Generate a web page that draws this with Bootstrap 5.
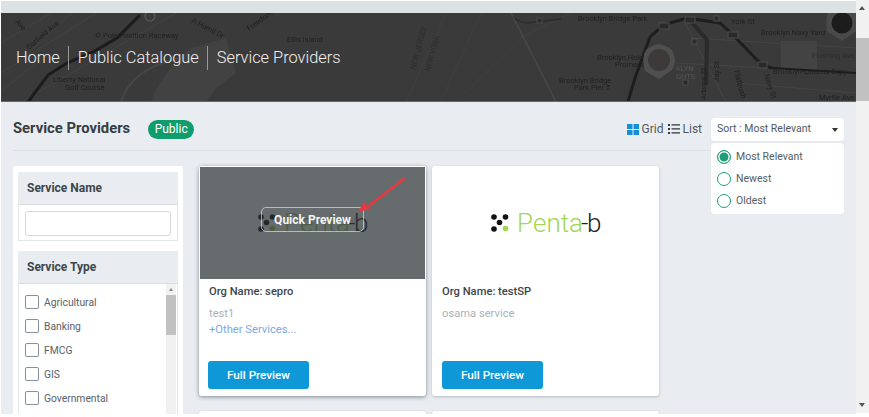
<!DOCTYPE html>
<html lang="en">
<head>
<meta charset="utf-8">
<title>Service Providers</title>
<link href="https://cdn.jsdelivr.net/npm/bootstrap@5.3.0/dist/css/bootstrap.min.css" rel="stylesheet">
<style>
html,body{height:417px;overflow:hidden;background:#fff}
body{font-family:Roboto,"Liberation Sans",sans-serif;color:#3d454b;padding:1px 0 3px 1px;font-size:12px}
.pg-main{width:855px;height:413px;overflow:hidden;background:#e9edf1;position:relative}
.pg-strip{height:12px;background:#dce1e4}
.pg-hero{height:89px;background:#3b3b3b;position:relative;padding-left:15px;border-bottom:1px solid #666;overflow:hidden}
.pg-map{position:absolute;left:0;top:0;width:855px;height:89px;filter:blur(.4px)}
.pg-map text{font-family:Roboto,"Liberation Sans",sans-serif;font-size:7.500px;fill:#212121}
.pg-crumb{position:relative;height:100%;font-size:16.400px;font-weight:300;color:#f1f1f1;padding-top:2px}
.pg-crumb span{line-height:24px}
.pg-crumb span+span{border-left:1px solid #999;margin-left:8px;padding-left:9px}
.pg-head{height:49px;margin:0 12px;border-bottom:1px solid #dde1e5;padding-top:6px}
.pg-title{font-size:14.800px;font-weight:700;margin:0;color:#353c42}
.pg-badge{background:#0f9d6e;font-size:12px;font-weight:400;margin-left:18px;width:46px;height:19px;padding:0;line-height:19px}
.pg-view{font-size:12px;color:#50585e}
.pg-view svg{display:block}
.pg-view-item{gap:3px}
.pg-views{gap:4px;margin-right:9px}
.pg-select{width:133px;height:23px;background:#fff;border-radius:3px;padding:0 6px;font-size:10.500px;color:#50585e;box-shadow:0 0 1px #c9ced2}
.pg-caret{width:0;height:0;border:3px solid transparent;border-top:4px solid #333;margin-top:4px}
.pg-menu{position:absolute;left:710px;top:142px;width:133px;height:71px;background:#fff;border-radius:3px;padding:3px 6px;z-index:3;box-shadow:0 0 1px #c9ced2}
.pg-menu label{height:22px;font-size:10.500px;color:#555d63;gap:5px}
.pg-menu input.form-check-input{width:14px;height:14px;margin:0;background-image:none;border:1.500px solid #1f9d77;background-color:#fff;flex:none}
.pg-menu input.form-check-input:checked{box-shadow:inset 0 0 0 1.500px #fff;background:#1f9d77;border-color:#1f9d77}
.pg-body{margin:15px 12px 0;gap:16px}
.pg-side{width:170px;height:260px;background:#fff;border-radius:3px;padding:6px 5px 0;flex:none}
.pg-fhead{height:32px;background:#e9edf1;font-size:12px;font-weight:700;padding-left:9px;color:#3d454b}
.pg-fbox{height:37px;border:1px solid #e4e7ea;border-top-color:#d8dcdf;padding:6px;margin-bottom:10px}
.pg-fbox input.form-control{height:25px;min-height:0;padding:0;border-color:#d5d9dc;border-radius:3px}
.pg-list{height:140px;border:1px solid #e4e7ea;border-top-color:#d8dcdf;padding:11px 0 0 6px;position:relative;overflow:hidden}
.pg-list label{height:24px;font-size:10.300px;color:#596168;gap:5px;align-items:flex-start;line-height:14px;padding-top:0}
.pg-list label span{padding-top:1px}
.pg-list input.form-check-input{width:14px;height:14px;margin:0;border:1.500px solid #84919a;border-radius:2px;flex:none}
.pg-lbar{position:absolute;top:0;right:1px;bottom:0;width:10px;background:#f1f1f1}
.pg-lthumb{position:absolute;top:11px;left:0;right:0;height:40px;background:#c1c1c1}
.pg-larrow{position:absolute;top:4px;left:3px;border:2px solid transparent;border-bottom:3px solid #888;border-top:0}
.pg-grid{display:grid;grid-template-columns:227px 227px;gap:15px 6px;align-content:start}
.pg-card{height:230px;border:0;border-radius:3px;box-shadow:0 1px 3px rgba(60,75,85,.3);background:#fff}
.pg-card-first{box-shadow:0 1px 4px rgba(40,55,65,.55)}
.pg-shot{height:113px;position:relative;overflow:hidden}
.pg-shade{position:absolute;inset:1px 1px 0;background:rgba(43,50,53,.72)}
.pg-quick{width:103px;height:25px;background:transparent;border:1px solid rgba(255,255,255,.55);border-radius:5px;color:#f4f4f4;font-size:12px;font-weight:700;padding:0;position:absolute;left:62px;top:41px}
.pg-arrow{position:absolute;left:0;top:0;width:227px;height:113px}
.pg-logo{gap:8px;color:#a2d653;font-size:26px;font-weight:300;line-height:1;font-family:Roboto,"Liberation Sans",sans-serif}
.pg-logo b{font-weight:300;color:#222;letter-spacing:-1.500px;margin-left:-2px}
.pg-info{padding:5px 9px 0 10px;font-size:11.200px}
.pg-org{font-weight:500;margin:0;line-height:16px;color:#3d454b}
.pg-svc{margin:6px 0 0;color:#acb3b8;line-height:16px}
.pg-more{color:#7aa9e6;line-height:16px;display:block}
.pg-full{position:absolute;left:9px;top:195px;width:101px;height:28px;background:#0f98d8;border:0;border-radius:3px;color:#fff;font-size:11.700px;font-weight:500;padding:1px 0 0}
.pg-full-b{left:10px}
.pg-bar{width:13px;height:413px;background:#f1f1f1;position:relative;flex:none;margin-top:-1px}
.pg-bthumb{position:absolute;left:0;right:0;top:38px;height:63px;background:#c1c1c1}
.pg-up{position:absolute;left:3px;top:6px;border:3px solid transparent;border-bottom:4px solid #555;border-top:0}
.pg-down{position:absolute;left:3px;bottom:6px;border:3px solid transparent;border-top:4px solid #555;border-bottom:0}
</style>
</head>
<body class="d-flex m-0">
<div class="pg-main">
  <div class="pg-strip"></div>
  <div class="pg-hero">
    <svg class="pg-map" viewBox="0 0 855 89" aria-hidden="true">
      <rect width="855" height="89" fill="#3a3a3a"/>
      <path d="M0 30 L50 0 M0 60 L95 0 M0 78 L35 50 M20 89 L175 0 M70 0 L30 38" stroke="#434343" stroke-width="1" fill="none"/>
      <path d="M190 35 L225 25 L235 60 L215 75 L205 89 L150 89 Q160 60 190 35Z" fill="#424242"/>
      <path d="M120 89 Q130 55 180 45" stroke="#464646" stroke-width="2" fill="none"/>
      <path d="M27 89 L47 62 L66 50 L92 39 L116 25 L139 2" stroke="#1c1c1c" stroke-width="3" fill="none"/>
      <circle cx="149" cy="3" r="5" fill="none" stroke="#555" stroke-width="1.500"/>
      <path d="M440 89 L480 0 M405 89 L445 0 M455 89 L520 25 L570 0" stroke="#404040" stroke-width="1" fill="none"/>
      <path d="M510 0 Q512 8 526 10 L560 6" stroke="#2b2b2b" stroke-width="1.500" fill="none"/>
      <path d="M510 0 L555 89" stroke="#484848" stroke-width="1.500" fill="none"/>
      <path d="M675 50 L855 60 M690 25 L855 35 M735 70 L855 80 M680 2 L725 89" stroke="#454545" stroke-width="1" fill="none"/>
      <rect x="780" y="28" width="36" height="30" fill="#434343"/>
      <path d="M627 89 L634 65 L649 24 L662 12 L686 5 L719 10 L732 22 L761 52 L771 55" stroke="#1e1e1e" stroke-width="3" fill="none"/>
      <path d="M771 55 L855 60" stroke="#1c1c1c" stroke-width="2" fill="none"/>
      <path d="M689 7 L706 27 L705 72" stroke="#2a2a2a" stroke-width="4" fill="none"/>
      <g fill="#2a2a2a" stroke="#4d4d4d" stroke-width="1"><rect x="658" y="10" width="10" height="6"/><rect x="684" y="4" width="10" height="6"/><rect x="727" y="19" width="10" height="6"/><rect x="757" y="49" width="9" height="6"/><rect x="691" y="26" width="5" height="5"/><rect x="682" y="67" width="5" height="5"/><rect x="713" y="3" width="5" height="5"/><rect x="536" y="5" width="5" height="5"/></g>
      <text x="102" y="25">Pole Position Raceway</text>
      <circle cx="97" cy="22" r="2" fill="none" stroke="#222"/>
      <text x="52" y="69">Liberty National</text>
      <text x="64" y="77">Golf Course</text>
      <text x="286" y="29">Ellis Island</text>
      <text x="190" y="9" transform="rotate(28 190 9)">A Hamil Dr</text>
      <text x="248" y="18" transform="rotate(-35 248 18)">Freedom Way</text>
      <text x="28" y="37" transform="rotate(-40 28 37)">Garfield Ave</text>
      <text x="14" y="9" transform="rotate(50 14 9)">Ave</text>
      <text x="414" y="57" transform="rotate(-75 414 57)" style="fill:#2d2d2d">NEW JERSEY</text>
      <text x="429" y="59" transform="rotate(-75 429 59)" style="fill:#2d2d2d">NEW YORK</text>
      <text x="577" y="8">Brooklyn Bridge Park</text>
      <text x="730" y="11">York St</text>
      <text x="760" y="22">Brooklyn Navy Yard</text>
      <text x="811" y="45" style="fill:#2c2c2c">Flushing Ave</text>
      <text x="596" y="47">Brooklyn Heights</text>
      <text x="614" y="54">Promenade</text>
      <text x="558" y="70">Brooklyn Bridge</text>
      <text x="573" y="77">Park Pier 5</text>
      <text x="772" y="61">Brooklyn-Queens Expy</text>
      <text x="818" y="87">Myrtle Ave</text>
      <text x="675" y="58" style="fill:#555">KLYN</text>
      <text x="675" y="66" style="fill:#555">GHTS</text>
      <text x="705" y="87" transform="rotate(-90 705 87)">Adams St</text>
      <text x="718" y="69" transform="rotate(-90 718 69)">Jay St</text>
      <text x="733" y="58" transform="rotate(75 733 58)">Flatbush A</text>
      <text x="763" y="62" transform="rotate(72 763 62)">Navy St</text>
      <path d="M644 58 Q640 45 645 37 Q658 26 671 37 Q677 48 671 57 L658 66Z" fill="#4f4f4f"/>
      <circle cx="658" cy="47" r="11" fill="#3e3a3a"/>
      <path d="M826 18 Q822 -8 841 -10 Q860 -8 855 18 L841 28Z" fill="#4a4a4a"/>
      <circle cx="841" cy="10" r="10.500" fill="#1c1c1c"/>
    </svg>
    <div class="pg-crumb d-flex align-items-center"><span>Home</span><span>Public Catalogue</span><span>Service Providers</span></div>
  </div>
  <div class="pg-head d-flex align-items-center">
    <h1 class="pg-title">Service Providers</h1>
    <span class="badge rounded-pill pg-badge">Public</span>
    <div class="ms-auto d-flex align-items-center">
      <div class="d-flex align-items-center pg-views pg-view">
        <div class="d-flex align-items-center pg-view-item">
          <svg width="12" height="11" viewBox="0 0 12 11"><path fill="#1491d6" d="M0 0h5.500v5H0zM6.500 0H12v5H6.500zM0 6h5.500v5H0zM6.500 6H12v5H6.500z"/></svg><span>Grid</span>
        </div>
        <div class="d-flex align-items-center pg-view-item">
          <svg width="12" height="10" viewBox="0 0 12 10"><path fill="#30363b" d="M0 0h2v2H0zM0 4h2v2H0zM0 8h2v2H0zM3.500 .2H12v1.400H3.500zM3.500 4.200H12v1.400H3.500zM3.500 8.200H12v1.400H3.500z"/></svg><span>List</span>
        </div>
      </div>
      <div class="pg-select d-flex align-items-center justify-content-between"><span>Sort : Most Relevant</span><span class="pg-caret"></span></div>
    </div>
  </div>
  <div class="pg-menu">
    <label class="d-flex align-items-center"><input class="form-check-input" type="radio" name="pgsort" checked><span>Most Relevant</span></label>
    <label class="d-flex align-items-center"><input class="form-check-input" type="radio" name="pgsort"><span>Newest</span></label>
    <label class="d-flex align-items-center"><input class="form-check-input" type="radio" name="pgsort"><span>Oldest</span></label>
  </div>
  <div class="pg-body d-flex">
    <aside class="pg-side">
      <div class="pg-fhead d-flex align-items-center">Service Name</div>
      <div class="pg-fbox"><input class="form-control" type="text" aria-label="Service Name"></div>
      <div class="pg-fhead d-flex align-items-center">Service Type</div>
      <div class="pg-list">
        <label class="d-flex"><input class="form-check-input" type="checkbox"><span>Agricultural</span></label>
        <label class="d-flex"><input class="form-check-input" type="checkbox"><span>Banking</span></label>
        <label class="d-flex"><input class="form-check-input" type="checkbox"><span>FMCG</span></label>
        <label class="d-flex"><input class="form-check-input" type="checkbox"><span>GIS</span></label>
        <label class="d-flex"><input class="form-check-input" type="checkbox"><span>Governmental</span></label>
        <label class="d-flex"><input class="form-check-input" type="checkbox"></label>
        <div class="pg-lbar"><div class="pg-larrow"></div><div class="pg-lthumb"></div></div>
      </div>
    </aside>
    <div class="pg-grid">
      <div class="card pg-card pg-card-first">
        <div class="pg-shot d-flex align-items-center justify-content-center">
          <div class="d-flex align-items-center pg-logo">
            <svg width="18" height="18" viewBox="0 0 18 18"><g fill="#111"><circle cx="3" cy="3" r="2.800"/><circle cx="14.500" cy="3" r="2.800"/><circle cx="8.500" cy="8.500" r="2.800"/><circle cx="3" cy="15" r="2.800"/></g><circle cx="14.500" cy="14.500" r="2.800" fill="#a2d653"/></svg>
            <span>Penta<b>-b</b></span>
          </div>
          <div class="pg-shade"></div>
          <button class="btn pg-quick" type="button">Quick Preview</button>
          <svg class="pg-arrow" viewBox="0 0 227 113" aria-hidden="true"><path d="M206 12 L167 42" stroke="#e5393f" stroke-width="2.500" fill="none"/><path d="M159 46 L171 43 L165 36Z" fill="#e5393f"/></svg>
        </div>
        <div class="pg-info">
          <p class="pg-org">Org Name: sepro</p>
          <p class="pg-svc">test1</p>
          <a class="pg-more text-decoration-none" href="#">+Other Services...</a>
        </div>
        <button class="btn pg-full" type="button">Full Preview</button>
      </div>
      <div class="card pg-card">
        <div class="pg-shot d-flex align-items-center justify-content-center">
          <div class="d-flex align-items-center pg-logo">
            <svg width="18" height="18" viewBox="0 0 18 18"><g fill="#111"><circle cx="3" cy="3" r="2.800"/><circle cx="14.500" cy="3" r="2.800"/><circle cx="8.500" cy="8.500" r="2.800"/><circle cx="3" cy="15" r="2.800"/></g><circle cx="14.500" cy="14.500" r="2.800" fill="#a2d653"/></svg>
            <span>Penta<b>-b</b></span>
          </div>
        </div>
        <div class="pg-info">
          <p class="pg-org">Org Name: testSP</p>
          <p class="pg-svc">osama service</p>
        </div>
        <button class="btn pg-full pg-full-b" type="button">Full Preview</button>
      </div>
      <div class="card pg-card"></div>
      <div class="card pg-card"></div>
    </div>
  </div>
</div>
<div class="pg-bar"><div class="pg-up"></div><div class="pg-bthumb"></div><div class="pg-down"></div></div>
<script src="https://cdn.jsdelivr.net/npm/bootstrap@5.3.0/dist/js/bootstrap.bundle.min.js"></script>
</body>
</html>
